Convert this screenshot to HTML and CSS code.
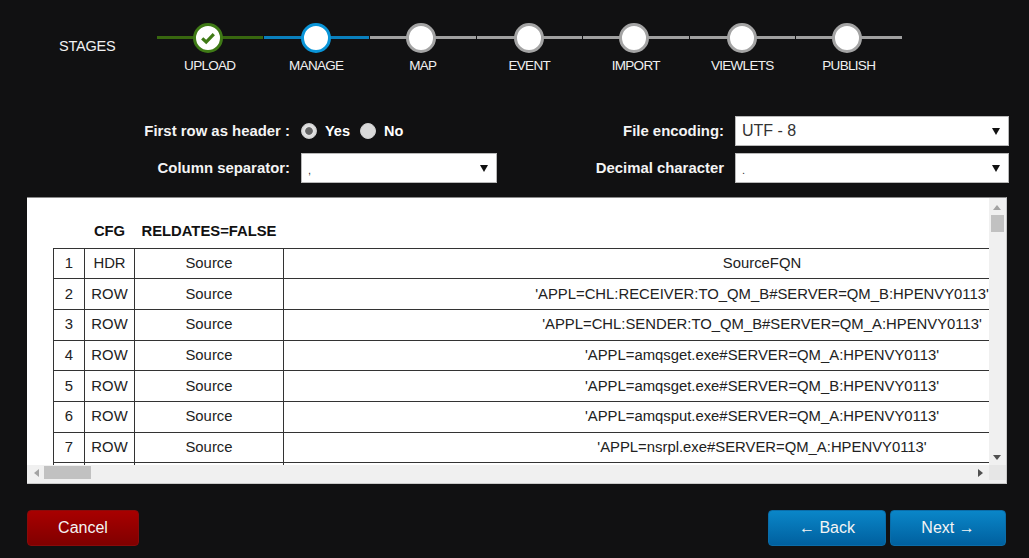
FILE: index.html
```html
<!DOCTYPE html>
<html lang="en">
<head>
<meta charset="utf-8">
<title>Stages - Manage</title>
<link rel="stylesheet" href="styles.css">
</head>
<body>
<div class="app">
  <section class="stages">
    <div class="stages-title">STAGES</div>
    <ol class="stepper">
      <li class="step done">
        <span class="dot"><svg class="check" viewBox="0 0 16 14" width="16" height="14"><path d="M2.2 7.4 6.2 11 13.8 3.2" fill="none" stroke="#3f7a16" stroke-width="3.2"/></svg></span>
        <span class="step-name">UPLOAD</span>
      </li>
      <li class="step active"><span class="dot"></span><span class="step-name">MANAGE</span></li>
      <li class="step"><span class="dot"></span><span class="step-name">MAP</span></li>
      <li class="step"><span class="dot"></span><span class="step-name">EVENT</span></li>
      <li class="step"><span class="dot"></span><span class="step-name">IMPORT</span></li>
      <li class="step"><span class="dot"></span><span class="step-name">VIEWLETS</span></li>
      <li class="step"><span class="dot"></span><span class="step-name">PUBLISH</span></li>
    </ol>
  </section>

  <form class="options">
    <div class="opt-label">First row as header :</div>
    <div class="radios">
      <label class="radio"><input type="radio" name="hdr" checked><span>Yes</span></label>
      <label class="radio"><input type="radio" name="hdr"><span>No</span></label>
    </div>
    <div class="opt-label">File encoding:</div>
    <div class="select large"><span>UTF - 8</span><i class="arrow"></i></div>
    <div class="opt-label">Column separator:</div>
    <div class="select"><span>,</span><i class="arrow"></i></div>
    <div class="opt-label">Decimal character</div>
    <div class="select"><span>.</span><i class="arrow"></i></div>
  </form>

  <section class="panel">
    <div class="view">
      <table class="grid">
        <colgroup><col class="c1"><col class="c2"><col class="c3"><col class="c4"></colgroup>
        <thead>
          <tr><th></th><th>CFG</th><th>RELDATES=FALSE</th><th></th></tr>
        </thead>
        <tbody>
          <tr><td>1</td><td>HDR</td><td>Source</td><td>SourceFQN</td></tr>
          <tr><td>2</td><td>ROW</td><td>Source</td><td>'APPL=CHL:RECEIVER:TO_QM_B#SERVER=QM_B:HPENVY0113'</td></tr>
          <tr><td>3</td><td>ROW</td><td>Source</td><td>'APPL=CHL:SENDER:TO_QM_B#SERVER=QM_A:HPENVY0113'</td></tr>
          <tr><td>4</td><td>ROW</td><td>Source</td><td>'APPL=amqsget.exe#SERVER=QM_A:HPENVY0113'</td></tr>
          <tr><td>5</td><td>ROW</td><td>Source</td><td>'APPL=amqsget.exe#SERVER=QM_B:HPENVY0113'</td></tr>
          <tr><td>6</td><td>ROW</td><td>Source</td><td>'APPL=amqsput.exe#SERVER=QM_A:HPENVY0113'</td></tr>
          <tr><td>7</td><td>ROW</td><td>Source</td><td>'APPL=nsrpl.exe#SERVER=QM_A:HPENVY0113'</td></tr>
          <tr><td></td><td></td><td></td><td></td></tr>
        </tbody>
      </table>
    </div>
    <div class="vbar">
      <svg class="sb-arrow" viewBox="0 0 8 5" width="8" height="5"><path d="M0 5 4 0 8 5z" fill="#a3a3a3"/></svg>
      <div class="vthumb"></div>
      <svg class="sb-arrow end" viewBox="0 0 8 5" width="8" height="5"><path d="M0 0 4 5 8 0z" fill="#505050"/></svg>
    </div>
    <div class="hbar">
      <svg class="sb-arrow" viewBox="0 0 5 8" width="5" height="8"><path d="M5 0 0 4 5 8z" fill="#a3a3a3"/></svg>
      <div class="hthumb"></div>
      <svg class="sb-arrow end" viewBox="0 0 5 8" width="5" height="8"><path d="M0 0 5 4 0 8z" fill="#505050"/></svg>
    </div>
    <div class="corner"></div>
  </section>

  <footer class="actions">
    <button class="btn cancel" type="button">Cancel</button>
    <div class="nav">
      <button class="btn back" type="button">← Back</button>
      <button class="btn next" type="button">Next →</button>
    </div>
  </footer>
</div>
</body>
</html>
```
FILE: styles.css
```css
* { box-sizing: border-box; }
html, body { margin: 0; padding: 0; height: 100%; overflow: hidden; background: #111112; }
body { font-family: "Liberation Sans", Arial, sans-serif; color: #fff; }
.app { width: 1029px; height: 558px; padding-top: 23px; }

/* stages */
.stages { display: flex; height: 61px; padding-left: 59px; }
.stages-title { width: 98px; padding-top: 15px; font-size: 14.5px; line-height: 17px; letter-spacing: -.2px; color: #f2f2f2; }
.stepper { display: flex; margin: 0; padding: 0; list-style: none; }
.step {
  display: flex; flex-direction: column; align-items: center;
  width: 105.5px; margin-right: 1px;
  background: linear-gradient(#a0a0a0, #a0a0a0) 0 13px / 100% 3px no-repeat;
}
.step.done { background-image: linear-gradient(#38670f, #38670f); }
.step.active { background-image: linear-gradient(#0a80bd, #0a80bd); }
.dot {
  display: flex; align-items: center; justify-content: center;
  width: 30px; height: 30px; border-radius: 50%;
  background: #fff; border: 3.5px solid #a4a4a4;
}
.step:nth-child(odd) .dot { margin-right: 3px; }
.step.done .dot { border-color: #3f7a16; }
.step.active .dot { border-color: #0a95d8; }
.step-name { margin-top: 5px; font-size: 13.5px; line-height: 16px; letter-spacing: -.7px; color: #f0f0f0; }

/* options */
.options {
  display: grid;
  grid-template-columns: 290px 196px 216px 274px;
  grid-auto-rows: 30px; gap: 7px 11px;
  margin-top: 32px;
}
.opt-label { align-self: center; text-align: right; font-size: 14.9px; font-weight: 700; line-height: 18px; color: #f4f4f4; }
.radios { display: flex; align-items: center; gap: 10px; }
.radio { display: flex; align-items: center; gap: 8px; font-size: 14.5px; font-weight: 700; }
.radio input {
  appearance: none; margin: 0; width: 16px; height: 16px; border-radius: 50%;
  background: #d9d9d9; border: 1px solid #cfcfcf;
}
.radio input:checked { background: radial-gradient(circle, #666 0 3.4px, #e2e2e2 4.2px, #d2d2d2 100%); }
.select {
  display: flex; align-items: center; justify-content: space-between;
  padding: 0 8px 0 6px;
  background: #fff; border: 1px solid #b9b9b9;
  color: #333; font-size: 11px; line-height: 14px;
}
.select span { padding-top: 4px; }
.select.large { font-size: 16px; padding-left: 6px; }
.select.large span { padding-top: 0; }
.arrow { width: 0; height: 0; border-style: solid; border-width: 7px 4px 0; border-color: #111 transparent transparent; }

/* panel */
.panel {
  display: grid; grid-template-columns: 1fr 17px; grid-template-rows: 1fr 18px;
  width: 980px; height: 287px; margin: 14px 0 0 27px;
  background: #fff; border-top: 1px solid #8a8a8a; border-right: 1px solid #c9c9c9; border-bottom: 1px solid #c9c9c9;
}
.view { overflow: hidden; padding: 17px 0 0 26px; }
.grid { border-collapse: collapse; table-layout: fixed; width: 1187px; color: #222; font-size: 14.85px; text-align: center; }
.c1 { width: 31px; } .c2 { width: 50px; } .c3 { width: 149px; } .c4 { width: 957px; }
.grid th { height: 33px; padding: 0; font-size: 14.8px; font-weight: 700; color: #111; vertical-align: middle; }
.grid td { height: 30.7px; padding: 0 0 1px; border: 1px solid #333; white-space: nowrap; }

/* scrollbars */
.vbar, .hbar { display: flex; align-items: center; background: #f0f0f0; }
.vbar { flex-direction: column; padding: 7px 2px 5px 1px; }
.vthumb { width: 13px; height: 17px; margin-top: 5px; background: #c1c1c1; }
.hbar { padding: 0 6px 3px 7px; }
.hthumb { width: 47px; height: 13px; margin-left: 5px; background: #c1c1c1; }
.sb-arrow { flex: none; }
.sb-arrow.end { margin: auto 0 0; }
.hbar .sb-arrow.end { margin: 0 0 0 auto; }
.corner { background: linear-gradient(#e6e6e6 15px, #f0f0f0 15px); }

/* footer */
.actions { display: flex; justify-content: space-between; width: 979px; margin: 26px 0 0 27px; }
.nav { display: flex; gap: 4px; }
.btn { height: 36px; padding: 0; border: 1px solid transparent; border-radius: 4px; color: #f4f4f4; font: 16px "Liberation Sans", Arial, sans-serif; }
.cancel { width: 112px; background: linear-gradient(#a80000, #800000); border-color: #8a0a0a; }
.back { width: 118px; background: linear-gradient(#0a86c8, #00609f); border-color: #0a6ca8; }
.next { width: 116px; background: linear-gradient(#0a86c8, #00609f); border-color: #0a6ca8; }
```
